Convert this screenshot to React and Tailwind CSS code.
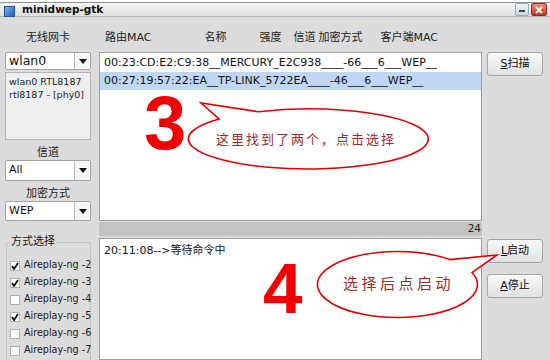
import React from "react";

function Arrow() {
  return (
    <svg width="8" height="5" viewBox="0 0 8 5">
      <path d="M0 0 L8 0 L4 5 Z" fill="#111" />
    </svg>
  );
}

function Combo({ value, h, text }) {
  return (
    <div className={`flex ${h} border border-[#a2a2a2] rounded-[2px] bg-white shadow-[inset_0_1px_0_#fff]`}>
      <div className={`flex-1 flex items-center pl-[3px] ${text} text-[#111]`}>{value}</div>
      <div className="w-[16px] flex items-center justify-center border-l border-[#b8b8b8] bg-[#f7f7f7]">
        <Arrow />
      </div>
    </div>
  );
}

function Check({ label, on }) {
  return (
    <div className="flex items-center h-[17px] gap-[4px] whitespace-nowrap">
      <div className="shrink-0 w-[10px] h-[10px] bg-white border border-[#b0b0b0] flex items-center justify-center">
        {on && (
          <svg width="8" height="8" viewBox="0 0 8 8">
            <path d="M1 4 L3 7 L7 1" stroke="#111" strokeWidth="1.8" fill="none" />
          </svg>
        )}
      </div>
      <span className="text-[9.6px] text-[#1a1a1a]">{label}</span>
    </div>
  );
}

function Btn({ k, label, className = "" }) {
  return (
    <div className={`h-[24px] flex items-center justify-center border border-[#a6a6a6] rounded-[3px] bg-gradient-to-b from-[#f8f8f8] to-[#e2e2e2] text-[11px] text-[#111] ${className}`}>
      <span className="underline underline-offset-1">{k}</span>
      <span>{label}</span>
    </div>
  );
}

export default function App() {
  const rows = [
    { t: "00:23:CD:E2:C9:38__MERCURY_E2C938____-66___6___WEP__", sel: false },
    { t: "00:27:19:57:22:EA__TP-LINK_5722EA____-46___6___WEP__", sel: true },
  ];
  const checks = [
    ["Aireplay-ng -2", true],
    ["Aireplay-ng -3", true],
    ["Aireplay-ng -4", false],
    ["Aireplay-ng -5", true],
    ["Aireplay-ng -6", false],
    ["Aireplay-ng -7", false],
  ];

  return (
    <div className="relative w-[550px] h-[360px] overflow-hidden bg-white font-['DejaVu_Sans','Noto_Sans_CJK_SC',sans-serif]">
      {/* title bar */}
      <div className="mt-[2px] h-[15px] flex items-center border-t border-[#8e8e8e] border-b border-b-[#b4b4b4] bg-gradient-to-b from-[#f7f7f7] to-[#dedede]">
        <div className="ml-[4px] w-[11px] h-[11px] mt-[3px] bg-gradient-to-br from-[#7fb0ea] to-[#1f5fc0] border border-[#23509a]" />
        <div className="ml-[7px] text-[10.5px] font-bold text-[#111] leading-none">minidwep-gtk</div>
        <div className="ml-auto flex items-center gap-[2px] mr-[3px]">
          <div className="w-[14px] h-[13px] rounded-[2px] border border-[#9aa6b4] bg-gradient-to-b from-[#f2f5f8] to-[#cfd7e0] flex items-end justify-center pb-[3px]">
            <div className="w-[6px] h-[2px] bg-[#3c4a5c]" />
          </div>
          <div className="w-[16px] h-[13px] rounded-[2px] border border-[#9a2a20] bg-gradient-to-b from-[#f08a78] to-[#c8321e] flex items-center justify-center">
            <svg width="8" height="8" viewBox="0 0 8 8">
              <path d="M1 1 L7 7 M7 1 L1 7" stroke="#fff" strokeWidth="1.8" />
            </svg>
          </div>
        </div>
      </div>

      {/* body */}
      <div className="flex h-[343px] bg-[#dcdcdc] pl-[5px]">
        {/* left column */}
        <div className="w-[86px] flex flex-col">
          <div className="h-[35px] pt-[14px] text-[11px] leading-[14px] text-center text-[#222]">无线网卡</div>
          <Combo value="wlan0" h="h-[18px]" text="text-[12.5px]" />
          <div className="mt-[2px] h-[68px] bg-[#efefef] border border-[#b4b4b4] px-[3px] pt-[2px] text-[9.5px] leading-[13px] text-[#1a1a1a]">
            <div>wlan0 RTL8187</div>
            <div>rtl8187 - [phy0]</div>
          </div>
          <div className="mt-[6px] h-[14px] text-[11px] leading-[14px] text-center text-[#222]">信道</div>
          <Combo value="All" h="h-[21px]" text="text-[11px]" />
          <div className="mt-[6px] h-[14px] text-[11px] leading-[14px] text-center text-[#222]">加密方式</div>
          <Combo value="WEP" h="h-[20px]" text="text-[11px]" />
          <div className="relative mt-[21px] ml-[1px] flex-1 border-t border-l border-r border-[#c2c2c2] rounded-t-[3px] pl-[3px] pt-[14px]">
            <div className="absolute left-[3px] top-[-8px] bg-[#dcdcdc] px-[1px] text-[11px] leading-[14px] text-[#222]">方式选择</div>
            {checks.map(([l, on]) => (
              <Check key={l} label={l} on={on} />
            ))}
          </div>
        </div>

        {/* middle */}
        <div className="ml-[8px] w-[383px] flex flex-col">
          <div className="h-[35px] pt-[14px] flex text-[11px] leading-[14px] text-[#222]">
            <span className="ml-[6px]">路由MAC</span>
            <span className="ml-[53px]">名称</span>
            <span className="ml-[33px]">强度</span>
            <span className="ml-[12px]">信道</span>
            <span className="ml-[3px]">加密方式</span>
            <span className="ml-[18px]">客户端MAC</span>
          </div>
          <div className="h-[169px] bg-white border border-[#9e9e9e] pt-[1px]">
            {rows.map((r) => (
              <div key={r.t} className={`h-[18px] flex items-center pl-[4px] text-[11px] text-[#111] whitespace-nowrap ${r.sel ? "bg-[#bfd7f2]" : ""}`}>
                {r.t}
              </div>
            ))}
          </div>
          <div className="mt-[1px] h-[14px] bg-[#c3c3c3] flex items-center justify-end pr-[1px] text-[10.5px] text-[#222]">24</div>
          <div className="mt-[2px] flex-1 bg-white border border-[#9e9e9e] px-[4px] pt-[4px] text-[11px] text-[#111]">
            20:11:08--&gt;等待命令中
          </div>
        </div>

        {/* right */}
        <div className="ml-[5px] w-[56px] flex flex-col">
          <div className="h-[35px]" />
          <Btn k="S" label="扫描" />
          <Btn k="L" label="启动" className="mt-[163px]" />
          <Btn k="A" label="停止" className="mt-[11px]" />
        </div>
      </div>

      {/* annotations */}
      <svg className="absolute left-0 top-0 pointer-events-none" width="550" height="360">
        <path d="M258 111.7 L201 103 L219 118.9 A120 30 0 1 0 258 111.7 Z" fill="#fff" stroke="#e00000" strokeWidth="1.6" />
        <path d="M450 259.6 L497 255 L472 272.5 A80 33 0 1 1 450 259.6 Z" fill="#fff" stroke="#e00000" strokeWidth="1.6" />
      </svg>
      <div className="absolute left-[144px] top-[85px] text-[76px] leading-none font-bold text-[#f00000] font-['Liberation_Sans',Arial,sans-serif]">3</div>
      <div className="absolute left-[263px] top-[253px] text-[71px] leading-none font-bold text-[#f00000] font-['Liberation_Sans',Arial,sans-serif]">4</div>
      <div className="absolute left-[216px] top-[131px] text-[13px] leading-[18px] tracking-[2px] text-[#9c2a2a] whitespace-nowrap">这里找到了两个，点击选择</div>
      <div className="absolute left-[343px] top-[274px] text-[15px] leading-[20px] tracking-[3.5px] text-[#9c2a2a] whitespace-nowrap">选择后点启动</div>
    </div>
  );
}
